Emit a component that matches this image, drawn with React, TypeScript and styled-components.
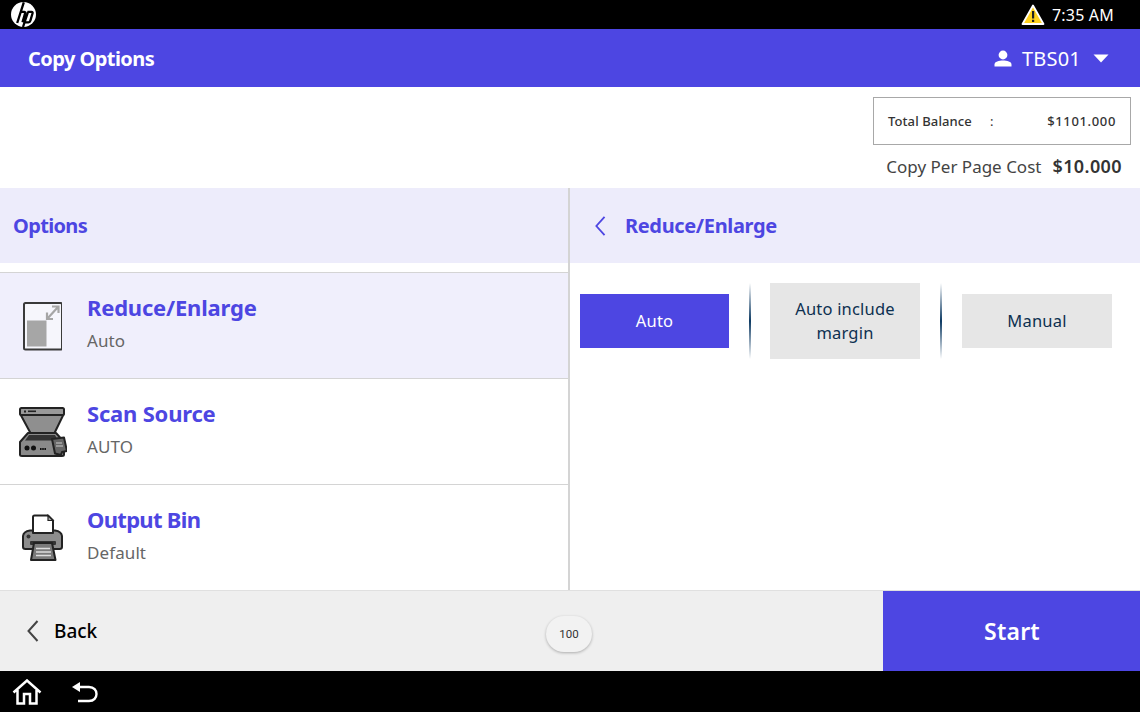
import React from "react";
import styled, { createGlobalStyle } from "styled-components";

const Global = createGlobalStyle`
  html, body { margin: 0; padding: 0; background: #fff; }
  body { font-family: "Noto Sans", "Open Sans", sans-serif; }
  * { box-sizing: border-box; }
`;

const Page = styled.div`
  width: 1140px;
  height: 712px;
  display: flex;
  flex-direction: column;
  overflow: hidden;
`;
const StatusBar = styled.div`
  height: 29px;
  background: #000;
  display: flex;
  align-items: center;
  justify-content: space-between;
  padding: 0 26px 0 11px;
  color: #fff;
`;
const StatusRight = styled.div`
  display: flex;
  align-items: center;
  gap: 7px;
`;
const Clock = styled.span`
  font-size: 16px;
  letter-spacing: 0.2px;
`;
const Header = styled.div`
  height: 58px;
  background: #4d46e2;
  display: flex;
  align-items: center;
  justify-content: space-between;
  padding: 0 31px 0 28px;
  color: #fff;
`;
const Title = styled.div`
  font-size: 20px;
  font-weight: 700;
  letter-spacing: -0.55px;
`;
const UserBox = styled.div`
  display: flex;
  align-items: center;
  font-size: 20px;
  letter-spacing: 0.2px;
`;
const UserName = styled.span`
  margin: 0 12px 0 10px;
`;
const BalanceArea = styled.div`
  height: 101px;
  display: flex;
  flex-direction: column;
  align-items: flex-end;
  padding: 10px 9px 0 0;
`;
const BalanceBox = styled.div`
  width: 258px;
  height: 48px;
  border: 1px solid #a8a8a8;
  display: flex;
  align-items: center;
  padding: 0 14px;
  font-size: 13px;
  color: #333;
`;
const BalanceLabel = styled.span`
  font-weight: 500;
  letter-spacing: 0.1px;
  width: 102px;
`;
const BalanceValue = styled.span`
  margin-left: auto;
  font-weight: 500;
  letter-spacing: 0.65px;
`;
const CostRow = styled.div`
  margin-top: 9px;
  display: flex;
  align-items: baseline;
  gap: 11px;
  font-size: 17px;
  color: #444;
  padding-right: 9px;
  line-height: 24px;
`;
const CostValue = styled.span`
  font-size: 18px;
  font-weight: 600;
  color: #333;
  letter-spacing: 0.4px;
`;
const Panels = styled.div`
  flex: 1;
  display: flex;
  min-height: 0;
`;
const LeftPanel = styled.div`
  width: 570px;
  border-right: 2px solid #d4d4d4;
  display: flex;
  flex-direction: column;
`;
const RightPanel = styled.div`
  flex: 1;
  display: flex;
  flex-direction: column;
`;
const PanelHead = styled.div`
  height: 75px;
  flex: none;
  background: #edecfb;
  display: flex;
  align-items: center;
  gap: 19px;
  color: #4d46e2;
  font-size: 20px;
  font-weight: 700;
  letter-spacing: ${(p) => p.$spacing}px;
  padding-left: ${(p) => p.$pad}px;
`;
const OptionList = styled.div`
  margin-top: 9px;
  border-top: 1px solid #d4d4d4;
`;
const OptionRow = styled.div`
  height: 106px;
  display: flex;
  align-items: center;
  background: ${(p) => (p.$active ? "#f0effc" : "#fff")};
  border-bottom: ${(p) => (p.$last ? "none" : "1px solid #d4d4d4")};
`;
const IconCell = styled.div`
  width: 87px;
  flex: none;
  display: flex;
  justify-content: center;
  padding-right: 3px;
`;
const OptionText = styled.div`
  display: flex;
  flex-direction: column;
  margin-bottom: 8px;
`;
const OptionName = styled.div`
  font-size: 22px;
  font-weight: 700;
  line-height: 34px;
  color: #4d46e2;
  letter-spacing: ${(p) => p.$spacing}px;
`;
const OptionValue = styled.div`
  font-size: 17px;
  line-height: 26px;
  margin-top: 4px;
  color: #666;
  letter-spacing: 0.1px;
`;
const ChoiceRow = styled.div`
  display: flex;
  align-items: center;
  padding: 20px 0 0 10px;
`;
const Choice = styled.div`
  width: ${(p) => p.$width}px;
  height: ${(p) => (p.$tall ? 76 : 54)}px;
  background: ${(p) => (p.$active ? "#4d46e2" : "#e6e6e6")};
  color: ${(p) => (p.$active ? "#fff" : "#0d3050")};
  display: flex;
  align-items: center;
  justify-content: center;
  text-align: center;
  font-size: 16.5px;
  line-height: 24px;
  letter-spacing: 0.2px;
`;
const Divider = styled.div`
  width: 2px;
  height: 76px;
  margin: 0 ${(p) => p.$right}px 0 20px;
  background: linear-gradient(to bottom, #fff, #0d3a63 50%, #fff);
`;
const Footer = styled.div`
  height: 81px;
  border-top: 1px solid #e0e0e0;
  background: #efefef;
  display: flex;
  align-items: center;
  position: relative;
`;
const BackButton = styled.div`
  display: flex;
  align-items: center;
  gap: 15px;
  padding-left: 26px;
  font-size: 19px;
  font-weight: 500;
  color: #000;
`;
const Pill = styled.div`
  position: absolute;
  left: 546px;
  top: 25px;
  width: 46px;
  height: 36px;
  border-radius: 18px;
  background: #f2f2f2;
  box-shadow: 0 1px 3px rgba(0, 0, 0, 0.28);
  display: flex;
  align-items: center;
  justify-content: center;
  font-family: Roboto, sans-serif;
  font-size: 11.5px;
  color: #333;
`;
const StartButton = styled.div`
  margin-left: auto;
  width: 257px;
  align-self: stretch;
  background: #4d46e2;
  color: #fff;
  font-size: 23px;
  font-weight: 600;
  letter-spacing: 0.2px;
  padding-left: 1px;
  display: flex;
  align-items: center;
  justify-content: center;
`;
const NavBar = styled.div`
  height: 41px;
  background: #000;
  display: flex;
  align-items: center;
  padding-left: 12px;
  gap: 29px;
`;

const HpLogo = () => (
  <svg width="25" height="25" viewBox="0 0 25 25">
    <circle cx="12.5" cy="12.5" r="12.5" fill="#fff" />
    <path d="M12.8 0.3 L6.2 21 M9 9.8 H13.2 Q14.5 9.8 14 11.5 L11.5 20.3 M17 9.8 L12 25 M16.5 9.8 H20.5 Q22 9.8 21.5 11.5 L19.3 18.8 Q19 20.3 17.5 20.3 H14.2" fill="none" stroke="#000" strokeWidth="2.3" />
  </svg>
);
const Warning = () => (
  <svg width="24" height="22" viewBox="0 0 24 22">
    <path d="M12 1.5 L22.5 20 H1.5 Z" fill="#ffd21f" stroke="#fff" strokeWidth="1.8" strokeLinejoin="round" />
    <rect x="11" y="7" width="2.2" height="7.5" fill="#222" />
    <rect x="11" y="15.8" width="2.2" height="2.2" fill="#222" />
  </svg>
);
const UserIcon = () => (
  <svg width="18" height="17" viewBox="0 0 18 17">
    <circle cx="9" cy="5" r="4.4" fill="#fff" />
    <path d="M0.5 16.5 V14.5 C0.5 11.5 5 10.5 9 10.5 C13 10.5 17.5 11.5 17.5 14.5 V16.5 Z" fill="#fff" />
  </svg>
);
const Caret = () => (
  <svg width="16" height="9" viewBox="0 0 16 9">
    <path d="M0.5 0.5 H15.5 L8 8.5 Z" fill="#fff" />
  </svg>
);
const ReduceIcon = () => (
  <svg width="40" height="50" viewBox="0 0 40 50">
    <rect x="2" y="2" width="38" height="46.5" rx="1.5" fill="#f6f6fc" stroke="#3a3a3a" strokeWidth="2" />
    <rect x="5" y="19.5" width="19.5" height="26" fill="#a6a6a6" />
    <path d="M25.5 17.5 L36 6 M30 5.5 H36.5 V12 M25 11.5 V18 H31" fill="none" stroke="#a6a6a6" strokeWidth="2.2" />
  </svg>
);
const ScannerIcon = () => (
  <svg width="50" height="52" viewBox="0 0 50 52">
    <path d="M3.5 8.5 L14 28 H37 L46.5 8.5 Z" fill="#8f8f8f" stroke="#222" strokeWidth="2" strokeLinejoin="round" />
    <rect x="3" y="2" width="44" height="7" rx="1.5" fill="#999" stroke="#222" strokeWidth="2" />
    <rect x="7" y="4.5" width="2" height="2" fill="#222" />
    <rect x="11" y="4.5" width="8" height="1.6" fill="#222" />
    <path d="M11 27 H39 L47 36 V48.5 Q47 50 45 50 H5 Q3 50 3 48.5 V36 Z" fill="#8a8a8a" stroke="#222" strokeWidth="2" strokeLinejoin="round" />
    <path d="M12 29 H38 L41 34.5 H8 Z" fill="#333" />
    <circle cx="10" cy="42" r="2.5" fill="#111" />
    <circle cx="16.5" cy="42" r="2.5" fill="#111" />
    <path d="M23 43 H29" stroke="#111" strokeWidth="2" strokeDasharray="1.6 0.6" />
    <path d="M35 33 L47 31.5 L50 45 L45 46 L44 49 L38 47.5 Z" fill="#666" stroke="#222" strokeWidth="2" strokeLinejoin="round" />
    <path d="M39 37 H45 M39 40 H46" stroke="#ccc" strokeWidth="1.2" />
  </svg>
);
const PrinterIcon = () => (
  <svg width="42" height="48" viewBox="0 0 42 48">
    <path d="M12 19 V3 Q12 1.5 13.5 1.5 H27 L32 6.5 V19 Z" fill="#fff" stroke="#222" strokeWidth="2" strokeLinejoin="round" />
    <path d="M27 1.5 V6.5 H32 Z" fill="#aaa" stroke="#222" strokeWidth="1.2" />
    <path d="M9 16.5 H12 V19 H32 V16.5 H34 Q40.5 17.5 41 22 V33 Q41 35 38.5 35 H4.5 Q2 35 2 33 V22 Q2.5 17.5 9 16.5 Z" fill="#8c8c8c" stroke="#222" strokeWidth="2" strokeLinejoin="round" />
    <circle cx="7.5" cy="22.5" r="2" fill="#333" />
    <rect x="9" y="27" width="26" height="4" rx="1" fill="#333" />
    <path d="M13 29 H31 L34.5 46 H10 Z" fill="#7a7a7a" stroke="#222" strokeWidth="2" strokeLinejoin="round" />
    <path d="M15 34.5 H29 M15 38 H30 M15 41.5 H30" stroke="#ddd" strokeWidth="1.4" />
  </svg>
);
const Chevron = ({ color, w, h }: { color: string; w: number; h: number }) => (
  <svg width={w} height={h} viewBox="0 0 12 22">
    <path d="M11 1 L2 11 L11 21" fill="none" stroke={color} strokeWidth="2" />
  </svg>
);
const HomeIcon = () => (
  <svg width="30" height="26" viewBox="0 0 30 26">
    <path d="M1.5 13.5 L15 1.5 L28.5 13.5 M5.5 11 V24.5 H12 V15 H18 V24.5 H24.5 V11" fill="none" stroke="#fff" strokeWidth="2.5" />
  </svg>
);
const ReturnIcon = () => (
  <svg width="27" height="22" viewBox="0 0 27 22">
    <path d="M1 6 L9 1 V11 Z" fill="#fff" />
    <path d="M7 6 H18 C28 6 28 20 18 20 H7" fill="none" stroke="#fff" strokeWidth="2.4" />
  </svg>
);

export default function App() {
  return (
    <Page>
      <Global />
      <StatusBar>
        <HpLogo />
        <StatusRight>
          <Warning />
          <Clock>7:35 AM</Clock>
        </StatusRight>
      </StatusBar>
      <Header>
        <Title>Copy Options</Title>
        <UserBox>
          <UserIcon />
          <UserName>TBS01</UserName>
          <Caret />
        </UserBox>
      </Header>
      <BalanceArea>
        <BalanceBox>
          <BalanceLabel>Total Balance</BalanceLabel>
          <span>:</span>
          <BalanceValue>$1101.000</BalanceValue>
        </BalanceBox>
        <CostRow>
          <span>Copy Per Page Cost</span>
          <CostValue>$10.000</CostValue>
        </CostRow>
      </BalanceArea>
      <Panels>
        <LeftPanel>
          <PanelHead $pad={13} $spacing={-0.65}>Options</PanelHead>
          <OptionList>
            <OptionRow $active>
              <IconCell><ReduceIcon /></IconCell>
              <OptionText>
                <OptionName $spacing={-0.2}>Reduce/Enlarge</OptionName>
                <OptionValue>Auto</OptionValue>
              </OptionText>
            </OptionRow>
            <OptionRow>
              <IconCell><ScannerIcon /></IconCell>
              <OptionText>
                <OptionName $spacing={-0.2}>Scan Source</OptionName>
                <OptionValue>AUTO</OptionValue>
              </OptionText>
            </OptionRow>
            <OptionRow $last>
              <IconCell><PrinterIcon /></IconCell>
              <OptionText>
                <OptionName $spacing={-0.7}>Output Bin</OptionName>
                <OptionValue>Default</OptionValue>
              </OptionText>
            </OptionRow>
          </OptionList>
        </LeftPanel>
        <RightPanel>
          <PanelHead $pad={24} $spacing={-0.35}>
            <Chevron color="#4d46e2" w={12} h={20} />
            <span>Reduce/Enlarge</span>
          </PanelHead>
          <ChoiceRow>
            <Choice $active $width={149}>Auto</Choice>
            <Divider $right={19} />
            <Choice $tall $width={150}>Auto include<br />margin</Choice>
            <Divider $right={20} />
            <Choice $width={150}>Manual</Choice>
          </ChoiceRow>
        </RightPanel>
      </Panels>
      <Footer>
        <BackButton>
          <Chevron color="#444" w={13} h={22} />
          <span>Back</span>
        </BackButton>
        <Pill>100</Pill>
        <StartButton>Start</StartButton>
      </Footer>
      <NavBar>
        <HomeIcon />
        <ReturnIcon />
      </NavBar>
    </Page>
  );
}
